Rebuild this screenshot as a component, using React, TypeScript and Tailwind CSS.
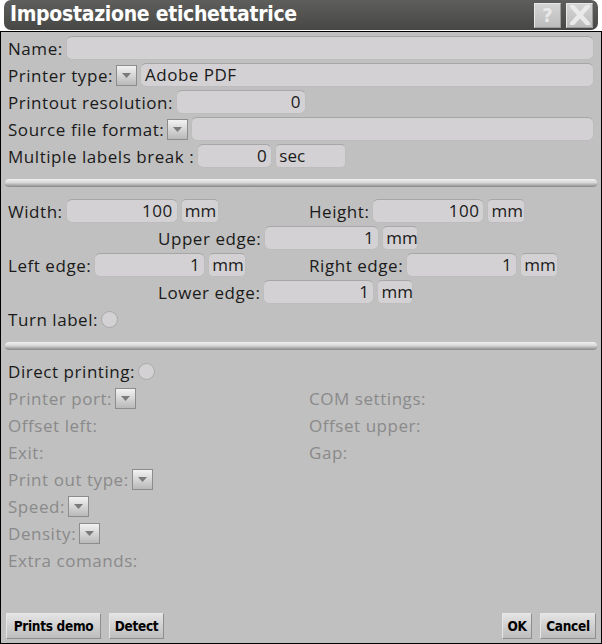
import React from 'react';

const font = { fontFamily: '"Open Sans", Lato, sans-serif' };
const condensed = { fontFamily: '"DejaVu Sans Condensed", "DejaVu Sans", sans-serif' };

const Field = ({ className = '', value = '', align = 'right' }: { className?: string; value?: string; align?: 'left' | 'right' }) => (
  <div
    className={`h-[24px] rounded-[6px] bg-[#d3d1d3] border border-[#bdbdbd] border-t-[#a6a6a6] flex items-center px-[4px] text-[17px] tracking-[0.5px] text-[#1a1a1a] ${
      align === 'right' ? 'justify-end' : 'justify-start'
    } ${className}`}
  >
    {value}
  </div>
);

const Unit = ({ label = 'mm', className = 'w-[38px]' }: { label?: string; className?: string }) => (
  <div className={`h-[24px] rounded-[5px] bg-[#d3d1d3] border border-[#bdbdbd] border-t-[#a6a6a6] flex items-center px-[3px] text-[17px] text-[#1a1a1a] ${className}`}>
    {label}
  </div>
);

const Drop = () => (
  <div className="w-[21px] h-[21px] border border-[#8c8c8c] bg-gradient-to-b from-[#f2f2f2] to-[#b9b9b9] flex items-center justify-center shrink-0">
    <svg width="9" height="5" viewBox="0 0 9 5">
      <polygon points="0,0 9,0 4.5,5" fill="#7a7a7a" />
    </svg>
  </div>
);

const Radio = () => (
  <div className="w-[17px] h-[17px] rounded-full bg-[#d3d1d3] border border-[#a9a9a9] shrink-0" />
);

const Separator = () => (
  <div className="mx-[4px] h-[8px] rounded-full bg-gradient-to-b from-[#f0f0f0] via-[#d9d9d9] to-[#9b9b9b] border-b border-[#8f8f8f]" />
);

const Row = ({ children, className = '' }: { children: React.ReactNode; className?: string }) => (
  <div className={`h-[24px] flex items-center gap-[3px] ${className}`}>{children}</div>
);

const Label = ({ children, dim = false }: { children: React.ReactNode; dim?: boolean }) => (
  <span className={`text-[17px] tracking-[0.55px] leading-none whitespace-nowrap ${dim ? 'text-[#8a8a8a]' : 'text-[#1a1a1a]'}`}>{children}</span>
);

const Btn = ({ children, className = '' }: { children: React.ReactNode; className?: string }) => (
  <div
    style={condensed}
    className={`h-[26px] px-[4px] flex items-center justify-center whitespace-nowrap border border-[#8e8e8e] border-t-[#e6e6e6] border-l-[#e6e6e6] bg-gradient-to-b from-[#e4e4e4] to-[#bdbdbd] text-[13.5px] font-bold text-black tracking-[-0.3px] ${className}`}
  >
    {children}
  </div>
);

export default function App() {
  return (
    <div className="w-[602px] h-[644px] bg-white overflow-hidden" style={font}>
      {/* title bar */}
      <div className="mx-[4px] h-[30px] rounded-[7px] bg-gradient-to-b from-[#5e5f5c] to-[#474845] flex items-center pl-[6px] pr-[5px]">
        <span style={condensed} className="text-[21px] font-bold text-white tracking-[-0.3px]">
          Impostazione etichettatrice
        </span>
        <div className="ml-auto flex items-center gap-[5px]">
          <div className="w-[27px] h-[25px] bg-gradient-to-b from-[#d4d4d4] to-[#bcbcbc] border border-[#e8e8e8] border-b-[#9a9a9a] border-r-[#9a9a9a] flex items-center justify-center text-[20px] font-bold text-[#e9e9e9]" style={condensed}>
            ?
          </div>
          <div className="w-[27px] h-[25px] bg-gradient-to-b from-[#d4d4d4] to-[#bcbcbc] border border-[#e8e8e8] border-b-[#9a9a9a] border-r-[#9a9a9a] flex items-center justify-center">
            <svg width="20" height="20" viewBox="0 0 20 20">
              <path d="M2 1 L18 19 M18 1 L2 19" stroke="#e9e9e9" strokeWidth="4.5" strokeLinecap="square" />
            </svg>
          </div>
        </div>
      </div>

      {/* body */}
      <div className="mt-[1px] h-[613px] border border-black bg-[#c0c0c0] flex flex-col">
        <div className="px-[7px] pt-[4px] flex flex-col gap-[3px]">
          <Row>
            <Label>Name:</Label>
            <Field className="flex-1" />
          </Row>
          <Row>
            <Label>Printer type:</Label>
            <Drop />
            <Field className="flex-1" value="Adobe PDF" align="left" />
          </Row>
          <Row>
            <Label>Printout resolution:</Label>
            <Field className="w-[130px]" value="0" />
          </Row>
          <Row>
            <Label>Source file format:</Label>
            <Drop />
            <Field className="flex-1" />
          </Row>
          <Row>
            <Label>Multiple labels break :</Label>
            <Field className="w-[75px]" value="0" />
            <Unit label="sec" className="w-[71px]" />
          </Row>
        </div>

        <div className="mt-[11px]">
          <Separator />
        </div>

        <div className="mt-[12px] px-[7px] flex flex-col gap-[3px]">
          <div className="flex">
            <Row className="w-[301px]">
              <Label>Width:</Label>
              <Field className="w-[112px]" value="100" />
              <Unit />
            </Row>
            <Row>
              <Label>Height:</Label>
              <Field className="w-[112px]" value="100" />
              <Unit />
            </Row>
          </div>
          <Row className="pl-[150px]">
            <Label>Upper edge:</Label>
            <Field className="w-[115px]" value="1" />
            <Unit className="w-[36px]" />
          </Row>
          <div className="flex">
            <Row className="w-[301px]">
              <Label>Left edge:</Label>
              <Field className="w-[111px]" value="1" />
              <Unit />
            </Row>
            <Row>
              <Label>Right edge:</Label>
              <Field className="w-[111px]" value="1" />
              <Unit />
            </Row>
          </div>
          <Row className="pl-[150px]">
            <Label>Lower edge:</Label>
            <Field className="w-[111px]" value="1" />
            <Unit className="w-[36px]" />
          </Row>
          <Row>
            <Label>Turn label:</Label>
            <Radio />
          </Row>
        </div>

        <div className="mt-[11px]">
          <Separator />
        </div>

        <div className="mt-[9px] px-[7px] flex flex-col gap-[3px]">
          <Row>
            <Label>Direct printing:</Label>
            <Radio />
          </Row>
          <div className="flex">
            <Row className="w-[301px]">
              <Label dim>Printer port:</Label>
              <Drop />
            </Row>
            <Row>
              <Label dim>COM settings:</Label>
            </Row>
          </div>
          <div className="flex">
            <Row className="w-[301px]">
              <Label dim>Offset left:</Label>
            </Row>
            <Row>
              <Label dim>Offset upper:</Label>
            </Row>
          </div>
          <div className="flex">
            <Row className="w-[301px]">
              <Label dim>Exit:</Label>
            </Row>
            <Row>
              <Label dim>Gap:</Label>
            </Row>
          </div>
          <Row>
            <Label dim>Print out type:</Label>
            <Drop />
          </Row>
          <Row>
            <Label dim>Speed:</Label>
            <Drop />
          </Row>
          <Row>
            <Label dim>Density:</Label>
            <Drop />
          </Row>
          <Row>
            <Label dim>Extra comands:</Label>
          </Row>
        </div>

        <div className="mt-auto mb-[4px] px-[5px] flex items-center gap-[8px]">
          <Btn className="w-[95px]">Prints demo</Btn>
          <Btn className="w-[55px]">Detect</Btn>
          <Btn className="ml-auto w-[30px]">OK</Btn>
          <Btn className="w-[56px]">Cancel</Btn>
        </div>
      </div>
    </div>
  );
}
